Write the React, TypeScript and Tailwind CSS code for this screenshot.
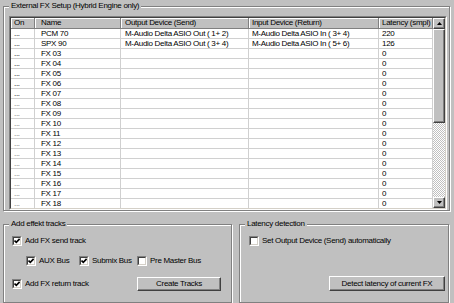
import React from 'react'

type Row = { name: string; out: string; inp: string; lat: string }

const rows: Row[] = [
  { name: 'PCM 70', out: 'M-Audio Delta ASIO Out ( 1+ 2)', inp: 'M-Audio Delta ASIO In ( 3+ 4)', lat: '220' },
  { name: 'SPX 90', out: 'M-Audio Delta ASIO Out ( 3+ 4)', inp: 'M-Audio Delta ASIO In ( 5+ 6)', lat: '126' },
  ...Array.from({ length: 16 }, (_, i) => ({
    name: `FX ${String(i + 3).padStart(2, '0')}`, out: '', inp: '', lat: '0',
  })),
]

function Check({ on }: { on?: boolean }) {
  return (
    <span className="inline-flex w-[10px] h-[10px] shrink-0 border border-t-[#808080] border-l-[#808080] border-r-white border-b-white">
      <span className="flex-1 flex items-center justify-center bg-white border border-t-[#404040] border-l-[#404040] border-r-[#d4d0c8] border-b-[#d4d0c8]">
        {on && (
          <svg width="6" height="6" viewBox="0 0 6 6">
            <polyline points="0.5,2.5 2.3,4.4 5.6,0.9" fill="none" stroke="#000" strokeWidth="1.6" />
          </svg>
        )}
      </span>
    </span>
  )
}

function Opt({ on, label, className = '' }: { on?: boolean; label: string; className?: string }) {
  return (
    <div className={`flex items-center gap-[3px] whitespace-nowrap ${className}`}>
      <Check on={on} />
      <span>{label}</span>
    </div>
  )
}

function Btn({ children, className = '' }: { children: React.ReactNode; className?: string }) {
  return (
    <button className={`flex items-center justify-center whitespace-nowrap bg-[#c0c0c0] border border-t-white border-l-white border-r-[#404040] border-b-[#404040] shadow-[inset_-1px_-1px_0_#808080] ${className}`}>
      {children}
    </button>
  )
}

function Arrow({ up }: { up?: boolean }) {
  return (
    <div className="h-[11px] flex items-center justify-center bg-[#c0c0c0] border border-t-white border-l-white border-r-[#404040] border-b-[#404040] shadow-[inset_-1px_-1px_0_#808080]">
      <svg width="5" height="3" viewBox="0 0 5 3">
        <polygon points={up ? '2.5,0 5,3 0,3' : '0,0 5,0 2.5,3'} fill="#000" />
      </svg>
    </div>
  )
}

const cols = [
  { label: 'On', w: 'w-[24px] pl-[3px]' },
  { label: 'Name', w: 'w-[86px] pl-[6px]' },
  { label: 'Output Device (Send)', w: 'w-[128px] pl-[4px]' },
  { label: 'Input Device (Return)', w: 'w-[130px] pl-[3px]' },
  { label: 'Latency (smpl)', w: 'w-[54px] pl-[3px]' },
]

export default function App() {
  return (
    <div className="w-[454px] h-[303px] overflow-hidden bg-[#c0c0c0] pt-px text-black text-[8px] leading-[10px] tracking-[-0.3px] font-['Liberation_Sans',Arial,sans-serif]">
      <fieldset className="ml-[3px] mr-[4px] border border-[#808080] shadow-[inset_1px_1px_0_#fff,1px_1px_0_#fff]">
        <legend className="ml-[5px] px-[2px] bg-[#c0c0c0] leading-[10px]">External FX Setup (Hybrid Engine only)</legend>
        <div className="ml-[5px] mr-[2px] mt-[5px] border border-t-[#808080] border-l-[#808080] border-r-white border-b-white">
          <div className="flex h-[192px] overflow-hidden bg-white border border-t-[#404040] border-l-[#404040] border-r-[#d4d0c8] border-b-[#d4d0c8]">
            <div className="w-[422px]">
              <div className="flex h-[11px] bg-[#c0c0c0] border-b border-b-[#808080]">
                {cols.map(c => (
                  <div key={c.label} className={`${c.w} shrink-0 whitespace-nowrap overflow-hidden border-r border-r-[#808080] shadow-[inset_1px_1px_0_#fff]`}>
                    {c.label}
                  </div>
                ))}
              </div>
              {rows.map((r, i) => (
                <div key={r.name} className="flex h-[10px]">
                  <div className={`w-[24px] pl-[3px] shrink-0 border-r border-b border-[#d0d0d0] ${i < 7 ? 'text-black' : 'text-[#707070]'}`}>...</div>
                  <div className="w-[86px] pl-[6px] shrink-0 border-r border-b border-[#d0d0d0]">{r.name}</div>
                  <div className="w-[128px] pl-[4px] shrink-0 whitespace-nowrap border-r border-b border-[#d0d0d0]">{r.out}</div>
                  <div className="w-[130px] pl-[3px] shrink-0 whitespace-nowrap border-r border-b border-[#d0d0d0]">{r.inp}</div>
                  <div className="w-[54px] pl-[3px] shrink-0 border-r border-b border-[#d0d0d0]">{r.lat}</div>
                </div>
              ))}
            </div>
            <div className="w-[12px] flex flex-col">
              <Arrow up />
              <div className="h-[94px] bg-[#c0c0c0] border border-t-white border-l-white border-r-[#404040] border-b-[#404040] shadow-[inset_-1px_-1px_0_#808080]" />
              <div className="flex-1 bg-[image:repeating-conic-gradient(#fff_0_25%,#c0c0c0_0_50%)] bg-[length:2px_2px]" />
              <Arrow />
            </div>
          </div>
        </div>
      </fieldset>

      <div className="flex gap-[7px] ml-[3px] mr-[5px] mt-[8px]">
        <fieldset className="w-[229px] h-[84px] border border-[#808080] shadow-[inset_1px_1px_0_#fff,1px_1px_0_#fff]">
          <legend className="ml-[5px] px-[2px] bg-[#c0c0c0] leading-[10px]">Add effekt tracks</legend>
          <div className="flex flex-col pl-[8px] pt-[7px]">
            <Opt on label="Add FX send track" />
            <div className="flex mt-[10px] pl-[14px]">
              <Opt on label="AUX Bus" className="w-[53px]" />
              <Opt on label="Submix Bus" className="w-[58px]" />
              <Opt label="Pre Master Bus" />
            </div>
            <div className="flex items-center mt-[11px]">
              <Opt on label="Add FX return track" className="w-[125px]" />
              <Btn className="w-[84px] h-[14px]">Create Tracks</Btn>
            </div>
          </div>
        </fieldset>

        <fieldset className="flex-1 h-[84px] border border-[#808080] shadow-[inset_1px_1px_0_#fff,1px_1px_0_#fff]">
          <legend className="ml-[5px] px-[2px] bg-[#c0c0c0] leading-[10px]">Latency detection</legend>
          <div className="flex flex-col pl-[9px] pr-[3px] pt-[7px]">
            <Opt label="Set Output Device (Send) automatically" />
            <div className="flex justify-end mt-[30px]">
              <Btn className="w-[116px] h-[15px]">Detect latency of current FX</Btn>
            </div>
          </div>
        </fieldset>
      </div>
    </div>
  )
}
